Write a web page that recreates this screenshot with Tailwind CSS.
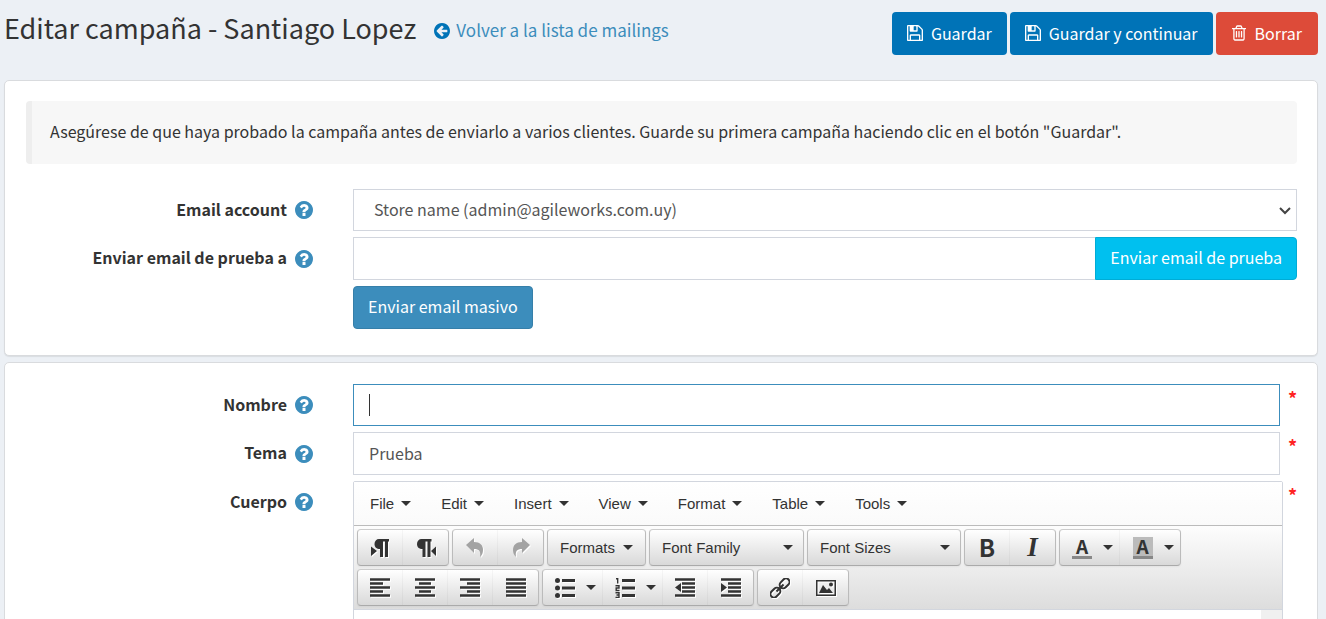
<!DOCTYPE html>
<html lang="es">
<head>
<meta charset="utf-8">
<title>Editar campaña - Santiago Lopez</title>
<script src="https://cdn.jsdelivr.net/npm/@tailwindcss/browser@4"></script>
</head>
<body class="h-screen overflow-hidden bg-[#ecf0f5] font-['Noto_Sans_CJK_SC','Source_Sans_Pro',sans-serif] text-[16px] leading-6 text-[#333]">

<svg class="hidden" aria-hidden="true">
  <symbol id="save" viewBox="0 128 1536 1536"><path d="M384 1536h768v-384h-768v384zm896 0h128v-896q0-14-10-38.5t-20-34.5l-281-281q-10-10-34-20t-39-10v416q0 40-28 68t-68 28h-576q-40 0-68-28t-28-68v-416h-128v1280h128v-416q0-40 28-68t68-28h832q40 0 68 28t28 68v416zm-384-928v-320q0-13-9.5-22.5t-22.5-9.5h-192q-13 0-22.5 9.5t-9.5 22.5v320q0 13 9.5 22.5t22.5 9.5h192q13 0 22.5-9.5t9.5-22.5zm640 32v928q0 40-28 68t-68 28h-1344q-40 0-68-28t-28-68v-1344q0-40 28-68t68-28h928q40 0 88 20t76 48l280 280q28 28 48 76t20 88z"/></symbol>
  <symbol id="help" viewBox="128 128 1536 1536"><path d="M1024 1376v-192q0-14-9-23t-23-9h-192q-14 0-23 9t-9 23v192q0 14 9 23t23 9h192q14 0 23-9t9-23zm256-672q0-88-55.5-163t-138.5-116-170-41q-243 0-371 213-15 24 8 42l132 100q7 6 19 6 16 0 25-12 53-68 86-92 34-24 86-24 48 0 85.5 26t37.5 59q0 38-20 61t-68 45q-63 28-115.5 86.5t-52.5 125.5v36q0 14 9 23t23 9h192q14 0 23-9t9-23q0-19 21.5-49.5t54.5-49.5q32-18 49-28.5t46-35 44.5-48 28-60.5 12.5-81zm384 192q0 209-103 385.5t-279.5 279.5-385.5 103-385.5-103-279.5-279.5-103-385.5 103-385.5 279.5-279.5 385.5-103 385.5 103 279.5 279.5 103 385.5z"/></symbol>
  <symbol id="caret" viewBox="0 0 10 5"><path d="M0 0h10L5 5z"/></symbol>
</svg>

<header class="flex items-start justify-between pt-2.5 pr-2 pl-1">
  <div class="flex items-baseline gap-[18px]">
    <h1 class="text-[27px] leading-9">Editar campaña - Santiago Lopez</h1>
    <a href="#" class="flex items-center gap-1.5 text-[17px] text-[#3c8dbc]">
      <svg class="mt-0.5 size-4 fill-[#0073b7]" viewBox="128 128 1536 1536"><path d="M1408 960v-128q0-26-19-45t-45-19h-502l189-189q19-19 19-45t-19-45l-91-91q-18-18-45-18t-45 18l-362 362-91 91q-18 18-18 45t18 45l91 91 362 362q18 18 45 18t45-18l91-91q18-18 18-45t-18-45l-189-189h502q26 0 45-19t19-45zm256-64q0 209-103 385.5t-279.5 279.5-385.5 103-385.5-103-279.5-279.5-103-385.5 103-385.5 279.5-279.5 385.5-103 385.5 103 279.5 279.5 103 385.5z"/></svg>
      Volver a la lista de mailings
    </a>
  </div>
  <div class="mt-0.5 flex gap-[3px] text-white">
    <button class="flex h-[43px] items-center gap-2 rounded-[4px] bg-[#0073b7] px-[15px] pb-0.5"><svg class="size-4 fill-current"><use href="#save"/></svg>Guardar</button>
    <button class="flex h-[43px] items-center gap-2 rounded-[4px] bg-[#0073b7] px-[15px] pb-0.5"><svg class="size-4 fill-current"><use href="#save"/></svg>Guardar y continuar</button>
    <button class="flex h-[43px] items-center gap-[9px] rounded-[4px] bg-[#dd4b39] px-4 pb-0.5"><svg class="h-4 w-[14px] fill-current" viewBox="192 128 1408 1536"><path d="M704 736v576q0 14-9 23t-23 9h-64q-14 0-23-9t-9-23v-576q0-14 9-23t23-9h64q14 0 23 9t9 23zm256 0v576q0 14-9 23t-23 9h-64q-14 0-23-9t-9-23v-576q0-14 9-23t23-9h64q14 0 23 9t9 23zm256 0v576q0 14-9 23t-23 9h-64q-14 0-23-9t-9-23v-576q0-14 9-23t23-9h64q14 0 23 9t9 23zm128 724v-948h-896v948q0 22 7 40.5t14.5 27 10.5 8.5h832q3 0 10.5-8.5t14.5-27 7-40.5zm-672-1076h448l-48-117q-7-9-17-11h-317q-10 2-17 11zm928 32v64q0 14-9 23t-23 9h-96v948q0 83-47 143.5t-113 60.5h-832q-66 0-113-58.5t-47-141.5v-952h-96q-14 0-23-9t-9-23v-64q0-14 9-23t23-9h309l70-167q15-37 54-63t79-26h320q40 0 79 26t54 63l70 167h309q14 0 23 9t9 23z"/></svg>Borrar</button>
  </div>
</header>

<main class="mt-[25px] flex flex-col gap-1.5 pr-2 pl-1">
  <section class="rounded-[5px] border border-[#d9dbde] bg-white px-5 pt-5 pb-[26px] pl-[21px] shadow-[0_1px_1px_rgba(0,0,0,0.08)]">
    <p class="rounded-[4px] border-l-[6px] border-[#eee] bg-[#f7f7f7] pt-[18px] pb-[21px] pl-[18px]">Asegúrese de que haya probado la campaña antes de enviarlo a varios clientes. Guarde su primera campaña haciendo clic en el botón "Guardar".</p>
    <div class="mt-[25px] grid grid-cols-[327px_1fr] gap-y-1.5">
      <div class="flex items-center justify-end gap-2 pr-10 font-bold"><label for="account" class="pb-[3px]">Email account</label><svg class="size-[18px] fill-[#3c8dbc]"><use href="#help"/></svg></div>
      <div class="relative">
        <select id="account" class="block h-[42px] w-full appearance-none border border-[#d2d6de] bg-white px-5 pb-0.5 text-[#555]"><option>Store name (admin@agileworks.com.uy)</option></select>
        <svg class="pointer-events-none absolute top-[18px] right-1.5 h-2 w-3 fill-none stroke-[#444] stroke-2" viewBox="0 0 12 8"><path d="M1 1l5 5 5-5"/></svg>
      </div>
      <div class="flex items-center justify-end gap-2 pr-10 font-bold"><label for="test" class="pb-[3px]">Enviar email de prueba a</label><svg class="size-[18px] fill-[#3c8dbc]"><use href="#help"/></svg></div>
      <div class="flex">
        <input id="test" type="text" class="h-[43px] min-w-0 flex-1 border border-r-0 border-[#d2d6de] px-4 text-[#555] outline-none">
        <button class="h-[43px] rounded-r-[4px] border border-[#00acd6] bg-[#00c0ef] px-[14px] pb-[3px] text-white">Enviar email de prueba</button>
      </div>
      <div class="col-start-2"><button class="h-[43px] rounded-[4px] border border-[#367fa9] bg-[#3c8dbc] px-[14px] pb-[3px] text-white">Enviar email masivo</button></div>
    </div>
  </section>

  <section class="rounded-t-[5px] border border-[#d9dbde] bg-white pt-[21px] pr-5 pl-[21px]">
    <div class="grid grid-cols-[327px_1fr] gap-y-1.5">
      <div class="flex items-center justify-end gap-2 pr-10 font-bold"><label for="name" class="pb-[3px]">Nombre</label><svg class="size-[18px] fill-[#3c8dbc]"><use href="#help"/></svg></div>
      <div class="flex">
        <div class="relative flex-1">
          <input id="name" type="text" class="block h-[42px] w-full border border-[#3c8dbc] px-[15px] text-[#555] outline-none">
          <span class="absolute top-2.5 left-4 h-[22px] w-px bg-[#333]"></span>
        </div>
        <span class="w-[17px] pt-0.5 pl-2 text-[18px] font-bold text-[#f22]">*</span>
      </div>
      <div class="flex items-center justify-end gap-2 pr-10 font-bold"><label for="subject" class="pb-[3px]">Tema</label><svg class="size-[18px] fill-[#3c8dbc]"><use href="#help"/></svg></div>
      <div class="flex">
        <input id="subject" type="text" value="Prueba" class="h-[43px] min-w-0 flex-1 border border-[#d2d6de] px-[15px] pb-0.5 text-[#555] outline-none">
        <span class="w-[17px] pt-0.5 pl-2 text-[18px] font-bold text-[#f22]">*</span>
      </div>
      <div class="flex h-[42px] items-center justify-end gap-2 pr-10 font-bold"><label for="body" class="pb-[3px]">Cuerpo</label><svg class="size-[18px] fill-[#3c8dbc]"><use href="#help"/></svg></div>
      <div class="flex">
        <div class="min-w-0 flex-1 rounded-t-[2px] border border-[#d2d6de] font-['Liberation_Sans',Arial,sans-serif] text-[15px] leading-5">
          <div class="flex h-11 items-stretch border-b border-[#bbb] bg-linear-to-b from-white to-[#fafafa] pl-px">
            <button class="flex items-center gap-[7px] px-[15px]">File<svg class="h-[5px] w-[10px] fill-[#333]"><use href="#caret"/></svg></button>
            <button class="flex items-center gap-[7px] px-[15px]">Edit<svg class="h-[5px] w-[10px] fill-[#333]"><use href="#caret"/></svg></button>
            <button class="flex items-center gap-[7px] px-[15px]">Insert<svg class="h-[5px] w-[10px] fill-[#333]"><use href="#caret"/></svg></button>
            <button class="flex items-center gap-[7px] px-[15px]">View<svg class="h-[5px] w-[10px] fill-[#333]"><use href="#caret"/></svg></button>
            <button class="flex items-center gap-[7px] px-[15px]">Format<svg class="h-[5px] w-[10px] fill-[#333]"><use href="#caret"/></svg></button>
            <button class="flex items-center gap-[7px] px-[15px]">Table<svg class="h-[5px] w-[10px] fill-[#333]"><use href="#caret"/></svg></button>
            <button class="flex items-center gap-[7px] px-[15px]">Tools<svg class="h-[5px] w-[10px] fill-[#333]"><use href="#caret"/></svg></button>
          </div>
          <div class="flex flex-wrap gap-[3px] border-b border-[#d2d6de] bg-linear-to-b from-[#fdfdfd] to-[#ddd] p-[3px]">
            <div class="flex h-[37px] divide-x divide-black/3 rounded-[4px] border border-[#bbb] border-t-[#ccc] border-b-[#aaa] bg-linear-to-b from-white to-[#d9d9d9] shadow-[0_1px_2px_rgba(0,0,0,0.05)]">
              <button aria-label="Left to right" class="flex w-[45px] items-center justify-center"><svg class="size-5 fill-[#333] drop-shadow-[1px_1px_0_#fff]" viewBox="0 0 20 20"><path d="M9 1h10v2.500h-1V19h-3V3.500h-2V19h-3v-8C6.500 11 4.500 9 4.500 6S6.500 1 9 1zM1 8.500l6 4.500-6 5z"/></svg></button>
              <button aria-label="Right to left" class="flex w-[45px] items-center justify-center"><svg class="size-5 fill-[#333] drop-shadow-[1px_1px_0_#fff]" viewBox="0 0 20 20"><path d="M5.500 1h10v2.500h-1V19h-3V3.500h-2V19h-3v-8C3 11 1 9 1 6s2-5 4.500-5zM20 8.500V18l-5-5z"/></svg></button>
            </div>
            <div class="flex h-[37px] divide-x divide-black/3 rounded-[4px] border border-[#bbb] border-t-[#ccc] border-b-[#aaa] bg-linear-to-b from-white to-[#d9d9d9] shadow-[0_1px_2px_rgba(0,0,0,0.05)]">
              <button aria-label="Undo" class="flex w-[45px] items-center justify-center"><svg class="size-5 fill-[#a3a3a3] drop-shadow-[1px_1px_0_#fff]" viewBox="0 0 20 20"><path d="M1 7l8-7v4c6 0 9 3 9 8 0 3-1 5-3 7 1-6-1-8-6-8v4z"/></svg></button>
              <button aria-label="Redo" class="flex w-[45px] items-center justify-center"><svg class="size-5 fill-[#a3a3a3] drop-shadow-[1px_1px_0_#fff]" viewBox="0 0 20 20"><path d="M19 7l-8-7v4c-6 0-9 3-9 8 0 3 1 5 3 7-1-6 1-8 6-8v4z"/></svg></button>
            </div>
            <div class="relative h-[37px] w-[99px] rounded-[4px] border border-[#bbb] border-t-[#ccc] border-b-[#aaa] bg-linear-to-b from-white to-[#d9d9d9] shadow-[0_1px_2px_rgba(0,0,0,0.05)]">
              <select aria-label="Formats" class="h-full w-full appearance-none pl-3 text-[#333]"><option>Formats</option></select>
              <svg class="pointer-events-none absolute top-[15px] right-3 h-[5px] w-[10px] fill-[#333]"><use href="#caret"/></svg>
            </div>
            <div class="relative h-[37px] w-[155px] rounded-[4px] border border-[#bbb] border-t-[#ccc] border-b-[#aaa] bg-linear-to-b from-white to-[#d9d9d9] shadow-[0_1px_2px_rgba(0,0,0,0.05)]">
              <select aria-label="Font Family" class="h-full w-full appearance-none pl-3 text-[#333]"><option>Font Family</option></select>
              <svg class="pointer-events-none absolute top-[15px] right-2.5 h-[5px] w-[10px] fill-[#333]"><use href="#caret"/></svg>
            </div>
            <div class="relative h-[37px] w-[154px] rounded-[4px] border border-[#bbb] border-t-[#ccc] border-b-[#aaa] bg-linear-to-b from-white to-[#d9d9d9] shadow-[0_1px_2px_rgba(0,0,0,0.05)]">
              <select aria-label="Font Sizes" class="h-full w-full appearance-none pl-3 text-[#333]"><option>Font Sizes</option></select>
              <svg class="pointer-events-none absolute top-[15px] right-2.5 h-[5px] w-[10px] fill-[#333]"><use href="#caret"/></svg>
            </div>
            <div class="flex h-[37px] divide-x divide-black/3 rounded-[4px] border border-[#bbb] border-t-[#ccc] border-b-[#aaa] bg-linear-to-b from-white to-[#d9d9d9] shadow-[0_1px_2px_rgba(0,0,0,0.05)]">
              <button class="w-[45px] pb-0.5 font-['Noto_Sans_CJK_SC'] text-[24px] font-bold">B</button>
              <button class="w-[45px] pb-0.5 font-['Liberation_Serif'] text-[27px] font-bold italic">I</button>
            </div>
            <div class="flex h-[37px] divide-x divide-black/3 rounded-[4px] border border-[#bbb] border-t-[#ccc] border-b-[#aaa] bg-linear-to-b from-white to-[#d9d9d9] shadow-[0_1px_2px_rgba(0,0,0,0.05)]">
              <button aria-label="Text color" class="flex w-[60px] items-center justify-center gap-[11px] pl-1.5"><span class="h-[22px] w-5 border-b-[3px] border-[#888] font-['Noto_Sans_CJK_SC'] text-[19px] font-bold leading-[18px]">A</span><svg class="h-[5px] w-[10px] fill-[#333]"><use href="#caret"/></svg></button>
              <button aria-label="Background color" class="flex w-[60px] items-center justify-center gap-[11px] pl-1.5"><span class="h-[22px] w-5 border-b-[3px] border-[#888] bg-[#bbb] font-['Noto_Sans_CJK_SC'] text-[19px] font-bold leading-[18px]">A</span><svg class="h-[5px] w-[10px] fill-[#333]"><use href="#caret"/></svg></button>
            </div>
            <div class="flex h-[37px] divide-x divide-black/3 rounded-[4px] border border-[#bbb] border-t-[#ccc] border-b-[#aaa] bg-linear-to-b from-white to-[#d9d9d9] shadow-[0_1px_2px_rgba(0,0,0,0.05)]">
              <button aria-label="Align left" class="flex w-[45px] items-center justify-center"><svg class="size-5 fill-none stroke-[#333] stroke-[2.6] drop-shadow-[1px_1px_0_#fff]" viewBox="0 0 20 20"><path d="M0 1.500h20M0 5.500h13M0 9.500h20M0 13.500h13M0 17.500h20"/></svg></button>
              <button aria-label="Align center" class="flex w-[45px] items-center justify-center"><svg class="size-5 fill-none stroke-[#333] stroke-[2.6] drop-shadow-[1px_1px_0_#fff]" viewBox="0 0 20 20"><path d="M0 1.500h20M4 5.500h12M0 9.500h20M4 13.500h12M0 17.500h20"/></svg></button>
              <button aria-label="Align right" class="flex w-[45px] items-center justify-center"><svg class="size-5 fill-none stroke-[#333] stroke-[2.6] drop-shadow-[1px_1px_0_#fff]" viewBox="0 0 20 20"><path d="M0 1.500h20M7 5.500h13M0 9.500h20M7 13.500h13M0 17.500h20"/></svg></button>
              <button aria-label="Justify" class="flex w-[45px] items-center justify-center"><svg class="size-5 fill-none stroke-[#333] stroke-[2.6] drop-shadow-[1px_1px_0_#fff]" viewBox="0 0 20 20"><path d="M0 1.500h20M0 5.500h20M0 9.500h20M0 13.500h20M0 17.500h20"/></svg></button>
            </div>
            <div class="flex h-[37px] divide-x divide-black/3 rounded-[4px] border border-[#bbb] border-t-[#ccc] border-b-[#aaa] bg-linear-to-b from-white to-[#d9d9d9] shadow-[0_1px_2px_rgba(0,0,0,0.05)]">
              <button aria-label="Bullet list" class="flex w-[60px] items-center justify-center gap-[11px] pl-1.5"><svg class="size-5 fill-[#333] drop-shadow-[1px_1px_0_#fff]" viewBox="0 0 20 20"><circle cx="2.500" cy="2.500" r="2.500"/><circle cx="2.500" cy="10" r="2.500"/><circle cx="2.500" cy="17.500" r="2.500"/><path d="M7 1h13v3H7zM7 8.500h13v3H7zM7 16h13v3H7z"/></svg><svg class="h-[5px] w-[10px] fill-[#333]"><use href="#caret"/></svg></button>
              <button aria-label="Numbered list" class="flex w-[60px] items-center justify-center gap-[11px] pl-1.5"><svg class="size-5 fill-[#333] drop-shadow-[1px_1px_0_#fff]" viewBox="0 0 20 20"><path d="M7 1h13v3H7zM7 8.500h13v3H7zM7 16h13v3H7z"/><path class="fill-none stroke-[#333] stroke-[1.4]" d="M1 .7h1.700V5.500M.5 7.700h3.500v2.300H1.200v2.500h3.300M.5 14.700H4v4.800H.5M1.500 17H4"/></svg><svg class="h-[5px] w-[10px] fill-[#333]"><use href="#caret"/></svg></button>
              <button aria-label="Outdent" class="flex w-[45px] items-center justify-center"><svg class="size-5 fill-[#333] stroke-[#333] stroke-[2.6] drop-shadow-[1px_1px_0_#fff]" viewBox="0 0 20 20"><path d="M0 1.500h20M7 5.500h13M7 9.500h13M7 13.500h13M0 17.500h20"/><path class="stroke-none" d="M6 5v9L0 9.500z"/></svg></button>
              <button aria-label="Indent" class="flex w-[45px] items-center justify-center"><svg class="size-5 fill-[#333] stroke-[#333] stroke-[2.6] drop-shadow-[1px_1px_0_#fff]" viewBox="0 0 20 20"><path d="M0 1.500h20M7 5.500h13M7 9.500h13M7 13.500h13M0 17.500h20"/><path class="stroke-none" d="M0 5v9l6-4.500z"/></svg></button>
            </div>
            <div class="flex h-[37px] divide-x divide-black/3 rounded-[4px] border border-[#bbb] border-t-[#ccc] border-b-[#aaa] bg-linear-to-b from-white to-[#d9d9d9] shadow-[0_1px_2px_rgba(0,0,0,0.05)]">
              <button aria-label="Link" class="flex w-[45px] items-center justify-center"><svg class="size-5 fill-none stroke-[#333] stroke-2 drop-shadow-[1px_1px_0_#fff]" viewBox="0 0 20 20"><g transform="rotate(-45 10 10)"><rect x="-2" y="6.500" width="11" height="7" rx="3.500"/><rect x="11" y="6.500" width="11" height="7" rx="3.500"/><path d="M5 10h10"/></g></svg></button>
              <button aria-label="Image" class="flex w-[45px] items-center justify-center"><svg class="size-5 fill-[#333] drop-shadow-[1px_1px_0_#fff]" viewBox="0 0 20 20"><path fill-rule="evenodd" d="M0 2h20v16H0zM1.500 3.500v13h17v-13z"/><path d="M3 15l4-8 4 5 2-2 4 5z"/><circle cx="15" cy="6.500" r="2"/></svg></button>
            </div>
          </div>
          <div class="flex h-64"><textarea id="body" class="min-w-0 flex-1 resize-none bg-white outline-none"></textarea><div class="w-[21px] bg-[#f0f0f0]"></div></div>
        </div>
        <span class="w-[14px] pt-0.5 pl-[5px] text-[18px] font-bold text-[#f22]">*</span>
      </div>
    </div>
  </section>
</main>
</body>
</html>
